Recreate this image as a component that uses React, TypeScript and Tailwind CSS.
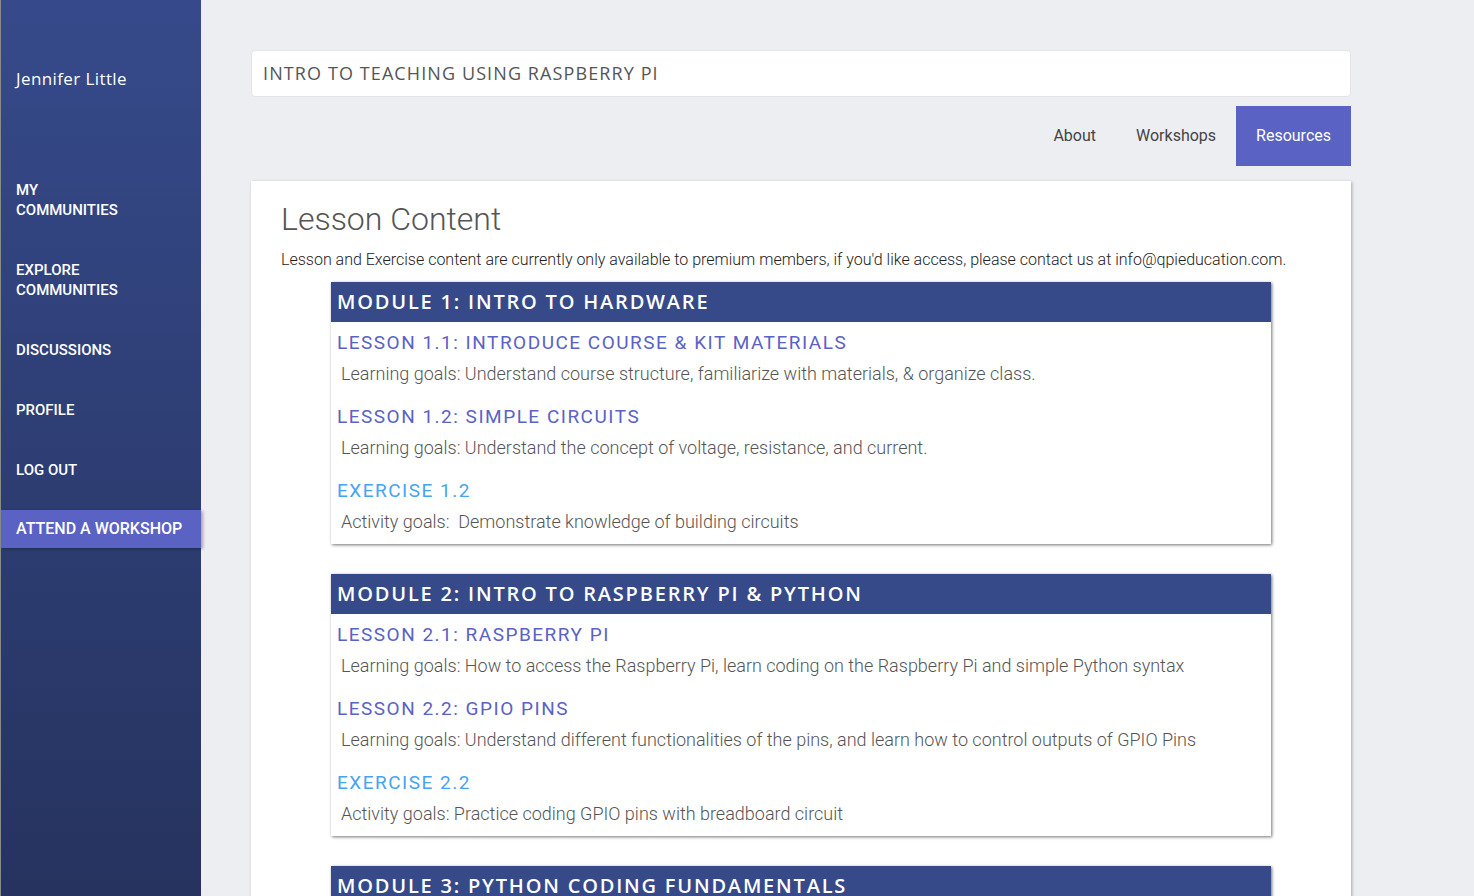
import React from 'react'

type Item = { title: string, goal: string, exercise?: boolean }
type Module = { title: string, items: Item[] }

const modules: Module[] = [
  {
    title: 'MODULE 1: INTRO TO HARDWARE',
    items: [
      { title: 'LESSON 1.1: INTRODUCE COURSE & KIT MATERIALS', goal: 'Learning goals: Understand course structure, familiarize with materials, & organize class.' },
      { title: 'LESSON 1.2: SIMPLE CIRCUITS', goal: 'Learning goals: Understand the concept of voltage, resistance, and current.' },
      { title: 'EXERCISE 1.2', goal: 'Activity goals:\u00a0 Demonstrate knowledge of building circuits', exercise: true },
    ],
  },
  {
    title: 'MODULE 2: INTRO TO RASPBERRY PI & PYTHON',
    items: [
      { title: 'LESSON 2.1: RASPBERRY PI', goal: 'Learning goals: How to access the Raspberry Pi, learn coding on the Raspberry Pi and simple Python syntax' },
      { title: 'LESSON 2.2: GPIO PINS', goal: 'Learning goals: Understand different functionalities of the pins, and learn how to control outputs of GPIO Pins' },
      { title: 'EXERCISE 2.2', goal: 'Activity goals: Practice coding GPIO pins with breadboard circuit', exercise: true },
    ],
  },
  {
    title: 'MODULE 3: PYTHON CODING FUNDAMENTALS',
    items: [
      { title: 'LESSON 3.1: VARIABLES & DATA TYPES', goal: 'Learning goals: Understand variables, data types and simple operations in Python' },
    ],
  },
]

const navItems = [
  ['MY', 'COMMUNITIES'],
  ['EXPLORE', 'COMMUNITIES'],
  ['DISCUSSIONS'],
  ['PROFILE'],
  ['LOG OUT'],
]

const heading = { fontFamily: '"Open Sans", "DejaVu Sans", sans-serif' }
const roboto = { fontFamily: 'Roboto, "Liberation Sans", sans-serif' }

function Sidebar() {
  return (
    <aside className="w-[201px] h-screen shrink-0 border-l border-[#8a8a8a] bg-gradient-to-b from-[#364a8b] to-[#26335f] text-white">
      <div className="pl-[15px] pt-[68px] text-[17px] leading-[22px] tracking-[0.4px]" style={heading}>Jennifer Little</div>
      <nav className="mt-[70px]" style={roboto}>
        {navItems.map((lines) => (
          <div key={lines.join(' ')} className="pl-[15px] py-[20px] text-[15px] leading-[20px] font-medium">
            {lines.map((l) => <div key={l}>{l}</div>)}
          </div>
        ))}
        <div className="mt-[10px] pl-[15px] py-[9px] text-[16px] leading-[20px] font-medium bg-[#5a62c4] shadow-[2px_1px_3px_rgba(0,0,0,0.3)]">
          ATTEND A WORKSHOP
        </div>
      </nav>
    </aside>
  )
}

function ModuleCard({ module }: { module: Module }) {
  return (
    <div className="bg-white shadow-[1px_1px_3px_rgba(0,0,0,0.55)] pb-[9px]">
      <div className="h-[40px] bg-[#364a8a] pl-[6px] flex items-center text-white text-[20px] font-semibold tracking-[1.8px]" style={heading}>
        {module.title}
      </div>
      {module.items.map((it, i) => (
        <div key={it.title} className={i == 0 ? 'mt-[8px]' : 'mt-[17px]'}>
          <div className={`pl-[6px] text-[19px] leading-[26px] tracking-[1.5px] ${it.exercise ? 'text-[#45a4f2]' : 'text-[#5a62c4]'}`} style={roboto}>
            {it.title}
          </div>
          <div className="mt-[5px] pl-[10px] text-[18px] leading-[26px] font-light text-[#555]" style={roboto}>
            {it.goal}
          </div>
        </div>
      ))}
    </div>
  )
}

export default function App() {
  return (
    <div className="flex h-screen overflow-hidden bg-[#edeef2]">
      <Sidebar />
      <main className="flex-1 pl-[50px]">
        <div className="w-[1100px]">
          <div className="mt-[50px] h-[47px] bg-white rounded-[4px] border border-[#e3e4e8] flex items-center pl-[11px] text-[18px] tracking-[1.1px] text-[#555]" style={heading}>
            INTRO TO TEACHING USING RASPBERRY PI
          </div>
          <div className="mt-[9px] flex justify-end text-[16px]" style={roboto}>
            <button className="h-[60px] px-[20px] text-[#444]">About</button>
            <button className="h-[60px] px-[20px] text-[#444]">Workshops</button>
            <button className="h-[60px] px-[20px] bg-[#5a62c4] text-white">Resources</button>
          </div>
          <div className="mt-[15px] bg-white shadow-[1px_1px_3px_rgba(0,0,0,0.3)] px-[30px] pt-[18px] pb-[40px]">
            <h1 className="text-[32px] leading-[40px] font-light text-[#555]" style={roboto}>Lesson Content</h1>
            <p className="mt-[10px] text-[16px] leading-[22px] font-light text-[#222]" style={roboto}>
              Lesson and Exercise content are currently only available to premium members, if you'd like access, please contact us at info@qpieducation.com.
            </p>
            <div className="mx-[50px] mt-[11px] flex flex-col gap-[30px]">
              {modules.map((m) => <ModuleCard key={m.title} module={m} />)}
            </div>
          </div>
        </div>
      </main>
    </div>
  )
}
